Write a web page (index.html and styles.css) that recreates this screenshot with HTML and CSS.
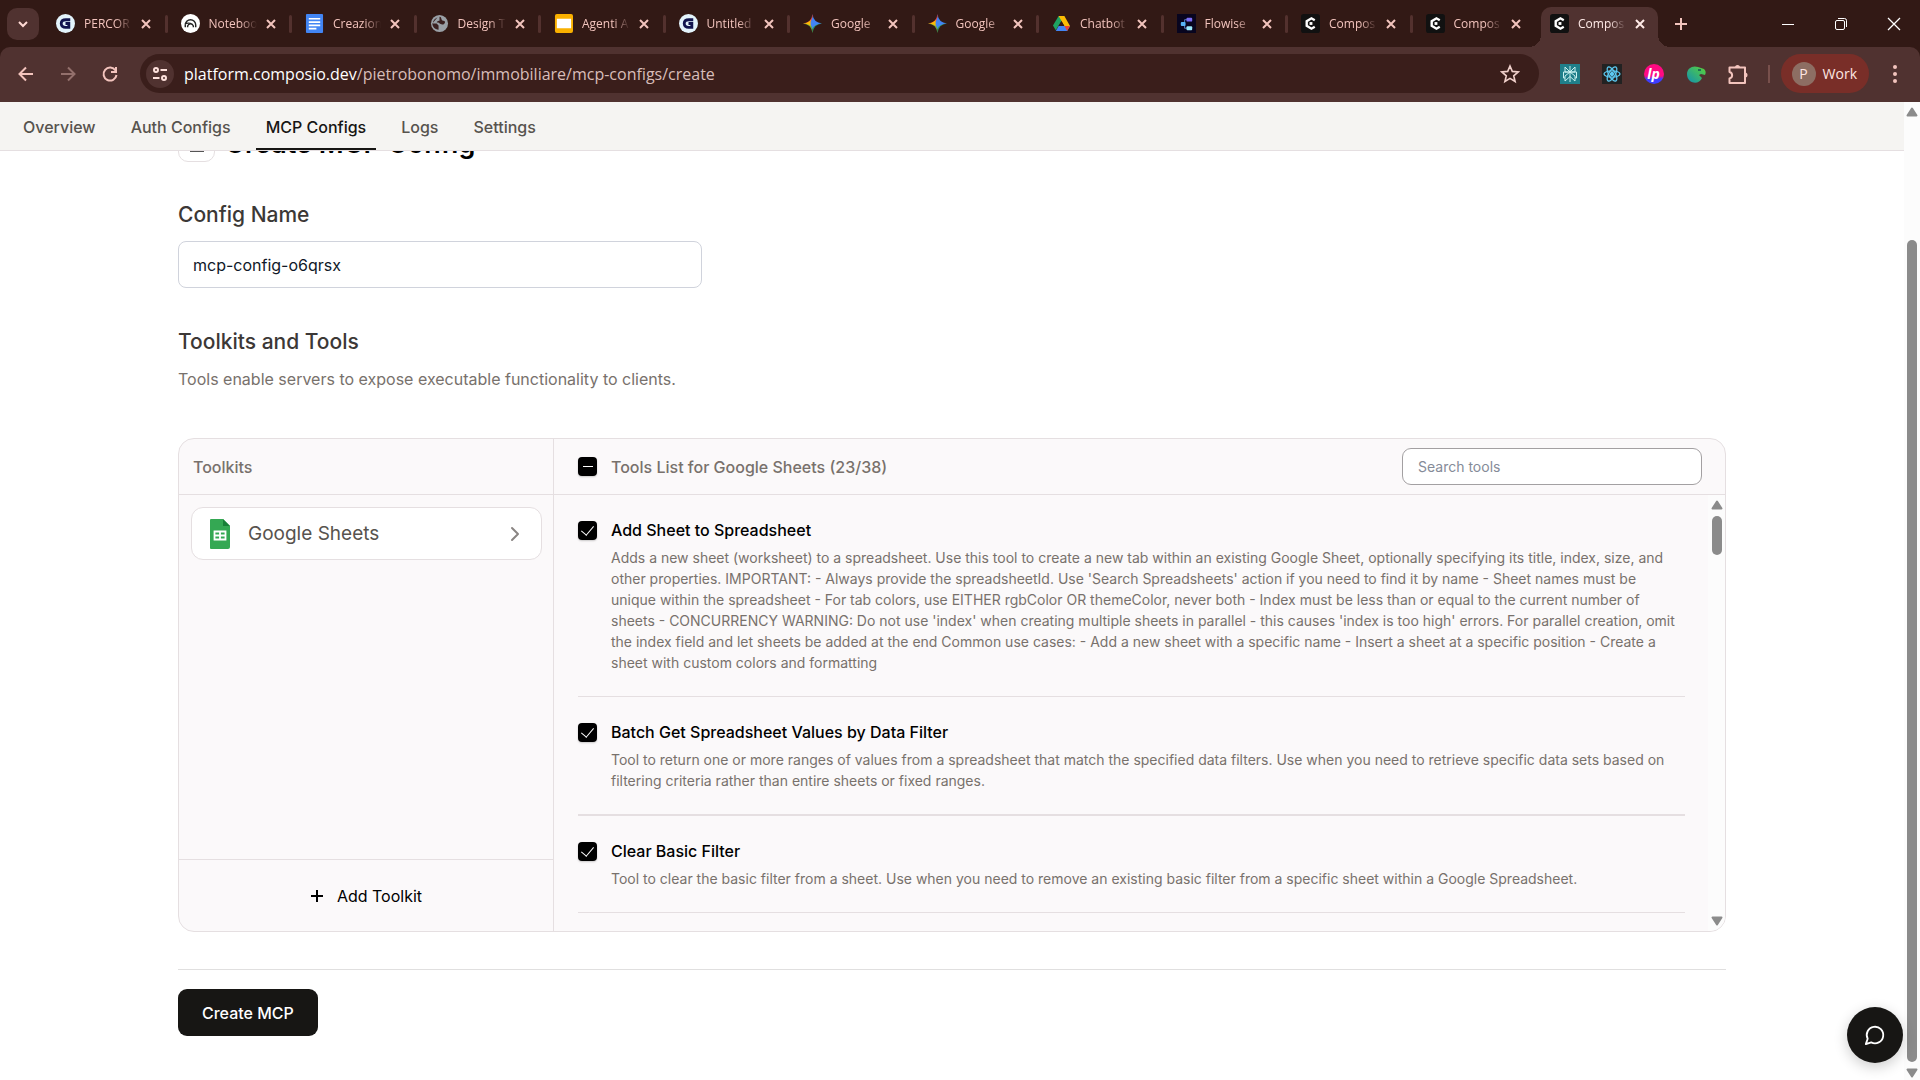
FILE: index.html
```html
<!DOCTYPE html>
<html lang="en">
<head>
<meta charset="utf-8">
<title>Composio</title>
<link rel="stylesheet" href="styles.css">
</head>
<body>
<svg class="defs" aria-hidden="true">
  <symbol id="close" viewBox="0 0 12 12"><path d="M2 2l8 8M10 2l-8 8" fill="none" stroke="currentColor" stroke-width="2"/></symbol>
  <symbol id="gamma" viewBox="0 0 20 20"><circle cx="10" cy="10" r="10" fill="#e4f4fc"/><path d="M15 6H10.500C7.500 6 5.500 7.500 5.500 10s2 4 4.500 4h3.500v-4H10" fill="none" stroke="#12154f" stroke-width="3"/></symbol>
  <symbol id="gemini" viewBox="0 0 20 20"><path d="M10 0Q11 9 20 10H10z" fill="#3f7df0"/><path d="M10 0Q9 9 0 10h10z" fill="#f0453c"/><path d="M0 10q9 1 10 10V10z" fill="#6fae3c"/><path d="M20 10q-9 1-10 10V10z" fill="#2c9a68"/><path d="M10 3Q11 9 19 10q-8 1-9 6-1-5-5-6 4-1 5-7z" fill="#4285f4"/><path d="M0 10q6-.5 8-4v7q-3-3-8-3z" fill="#fbbc04"/></symbol>
  <symbol id="composio" viewBox="0 0 20 20"><rect width="20" height="20" rx="3" fill="#111"/><path d="M14.500 6.500L11 4.500 6 7.500v5l5 3 3.500-2" fill="none" stroke="#fff" stroke-width="2.500"/><path d="M9 10h3" stroke="#fff" stroke-width="3"/></symbol>
  <symbol id="arrow-up" viewBox="0 0 12 10"><path d="M6 1.500L10.500 8.500h-9z" fill="#8b8b8b" stroke="#8b8b8b" stroke-width="2" stroke-linejoin="round"/></symbol>
  <symbol id="arrow-down" viewBox="0 0 12 10"><path d="M6 8.500L1.500 1.500h9z" fill="#8b8b8b" stroke="#8b8b8b" stroke-width="2" stroke-linejoin="round"/></symbol>
</svg>

<header class="browser">
  <div class="tabstrip">
    <button class="tab-search" aria-label="Search tabs"><svg width="12" height="12" viewBox="0 0 12 12"><path d="M2 4l4 4 4-4" fill="none" stroke="currentColor" stroke-width="2"/></svg></button>
    <div class="tabs">
      <div class="tab"><svg class="favicon"><use href="#gamma"/></svg><span class="tab-title">PERCOR</span><button class="tab-close" aria-label="Close"><svg><use href="#close"/></svg></button></div>
      <div class="tab"><svg class="favicon" viewBox="0 0 20 20"><circle cx="10" cy="10" r="10" fill="#fff"/><path d="M4.500 14v-2.500a5.500 5.500 0 0 1 11 0V14M7 14v-1.500a3.200 3.200 0 0 1 6 0V14M4 10.500a8 8 0 0 1 8 .5" fill="none" stroke="#222" stroke-width="1.500"/></svg><span class="tab-title">Noteboo</span><button class="tab-close" aria-label="Close"><svg><use href="#close"/></svg></button></div>
      <div class="tab"><svg class="favicon" viewBox="0 0 20 20"><rect x="1" width="18" height="20" rx="1" fill="#4285f4"/><path d="M4 5h12M4 8.500h12M4 12h12M4 15.500h8" stroke="#fff" stroke-width="1.800"/></svg><span class="tab-title">Creazion</span><button class="tab-close" aria-label="Close"><svg><use href="#close"/></svg></button></div>
      <div class="tab"><svg class="favicon" viewBox="0 0 20 20"><circle cx="10" cy="10" r="9" fill="#9aa0a6"/><path d="M8 3.500C5 5 3 7 3 10h4l2 2v4.500c-4-.5-6.500-3-6.500-6.500M10 3c3 0 1 4 4 4s2 4-1 4-3-2-5-2 0-2 2-2z" fill="#3a2020"/></svg><span class="tab-title">Design T</span><button class="tab-close" aria-label="Close"><svg><use href="#close"/></svg></button></div>
      <div class="tab"><svg class="favicon" viewBox="0 0 20 20"><rect x="1" width="19" height="20" rx="2" fill="#f9b000"/><rect x="3" y="5" width="15" height="10" fill="#fff"/></svg><span class="tab-title">Agenti A</span><button class="tab-close" aria-label="Close"><svg><use href="#close"/></svg></button></div>
      <div class="tab"><svg class="favicon"><use href="#gamma"/></svg><span class="tab-title">Untitled</span><button class="tab-close" aria-label="Close"><svg><use href="#close"/></svg></button></div>
      <div class="tab"><svg class="favicon"><use href="#gemini"/></svg><span class="tab-title">Google</span><button class="tab-close" aria-label="Close"><svg><use href="#close"/></svg></button></div>
      <div class="tab"><svg class="favicon"><use href="#gemini"/></svg><span class="tab-title">Google</span><button class="tab-close" aria-label="Close"><svg><use href="#close"/></svg></button></div>
      <div class="tab"><svg class="favicon" viewBox="0 0 20 20"><path d="M7 2h6l-3 5-6 10-3-5z" fill="#1ea362"/><path d="M7 2h6l6 10.500h-6z" fill="#fbbc04"/><path d="M7 12.500h12L16 18H4z" fill="#4285f4"/><path d="M13 12.500h6L16 18z" fill="#ea4335"/><path d="M10 7.500l3 5H7z" fill="#321915"/></svg><span class="tab-title">Chatbot</span><button class="tab-close" aria-label="Close"><svg><use href="#close"/></svg></button></div>
      <div class="tab"><svg class="favicon" viewBox="0 0 20 20"><rect width="20" height="20" fill="#08051f"/><path d="M8 10V6h4M8 10v5h4" fill="none" stroke="#567cc0"/><rect x="10" y="4" width="6" height="4" rx="1" fill="#7a6cf5"/><rect x="4" y="8.500" width="5" height="4" rx="1" fill="#58b4f5"/><rect x="10" y="13" width="6" height="4" rx="1" fill="#9be8fb"/></svg><span class="tab-title">Flowise</span><button class="tab-close" aria-label="Close"><svg><use href="#close"/></svg></button></div>
      <div class="tab"><svg class="favicon"><use href="#composio"/></svg><span class="tab-title">Compos</span><button class="tab-close" aria-label="Close"><svg><use href="#close"/></svg></button></div>
      <div class="tab"><svg class="favicon"><use href="#composio"/></svg><span class="tab-title">Compos</span><button class="tab-close" aria-label="Close"><svg><use href="#close"/></svg></button></div>
      <div class="tab tab-active"><svg class="favicon"><use href="#composio"/></svg><span class="tab-title">Compos</span><button class="tab-close" aria-label="Close"><svg><use href="#close"/></svg></button></div>
    </div>
    <button class="new-tab" aria-label="New tab"><svg width="14" height="14" viewBox="0 0 14 14"><path d="M7 1v12M1 7h12" stroke="currentColor" stroke-width="2"/></svg></button>
    <div class="window-controls">
      <button aria-label="Minimize"><svg width="14" height="14" viewBox="0 0 14 14"><path d="M1 7.500h12" stroke="currentColor"/></svg></button>
      <button aria-label="Restore"><svg width="14" height="14" viewBox="0 0 14 14"><rect x="1.500" y="3.500" width="9" height="9" rx="1.500" fill="none" stroke="currentColor"/><path d="M4 1.500h6.500a2 2 0 0 1 2 2V10" fill="none" stroke="currentColor"/></svg></button>
      <button aria-label="Close window"><svg width="14" height="14" viewBox="0 0 14 14"><path d="M1 1l12 12M13 1L1 13" stroke="currentColor" stroke-width="1.300"/></svg></button>
    </div>
  </div>

  <div class="toolbar">
    <div class="nav-buttons">
      <button aria-label="Back"><svg width="20" height="20" viewBox="0 0 20 20"><path d="M17 10H4M10 3.500L3.500 10l6.500 6.500" fill="none" stroke="currentColor" stroke-width="2"/></svg></button>
      <button class="dim" aria-label="Forward"><svg width="20" height="20" viewBox="0 0 20 20"><path d="M3 10h13M10 3.500l6.500 6.500-6.500 6.500" fill="none" stroke="currentColor" stroke-width="2"/></svg></button>
      <button aria-label="Reload"><svg width="20" height="20" viewBox="0 0 20 20"><path d="M15.500 6.500A6.500 6.500 0 1 0 16.500 11" fill="none" stroke="currentColor" stroke-width="2"/><path d="M16 3v5h-5" fill="none" stroke="currentColor" stroke-width="2"/></svg></button>
    </div>
    <div class="address">
      <button class="site-info" aria-label="Site information"><svg width="18" height="18" viewBox="0 0 18 18" fill="none" stroke="currentColor" stroke-width="2"><circle cx="5" cy="5" r="2"/><path d="M9.500 5H16M2 13h6.500"/><circle cx="13" cy="13" r="2"/></svg></button>
      <a class="url" href="#"><span class="host">platform.composio.dev</span>/pietrobonomo/immobiliare/mcp-configs/create</a>
      <button class="star" aria-label="Bookmark"><svg width="20" height="20" viewBox="0 0 20 20"><path d="M10 2l2.300 5.400 5.900.5-4.500 3.900 1.400 5.700-5.100-3.100-5.100 3.100 1.400-5.700L1.800 7.900l5.900-.5z" fill="none" stroke="currentColor" stroke-width="1.600"/></svg></button>
    </div>
    <div class="extensions">
      <button aria-label="Perplexity"><svg width="20" height="20" viewBox="0 0 20 20"><rect width="20" height="20" fill="#1f7f8a"/><path d="M10 2v16M5 3l5 5 5-5v5H5zM3.500 8h13v6H15v3l-5-4.500L5 17v-3H3.500z M5 14v-2l5-4 5 4v2" fill="none" stroke="#c9f1f0" stroke-width="1"/></svg></button>
      <button aria-label="React Developer Tools"><svg width="20" height="20" viewBox="0 0 20 20" fill="none" stroke="#5cc8f0" stroke-width="1.300"><rect width="20" height="20" fill="#222" stroke="none"/><ellipse cx="10" cy="10" rx="8" ry="3.200"/><ellipse cx="10" cy="10" rx="8" ry="3.200" transform="rotate(60 10 10)"/><ellipse cx="10" cy="10" rx="8" ry="3.200" transform="rotate(120 10 10)"/><circle cx="10" cy="10" r="1.500" fill="#5cc8f0"/></svg></button>
      <button class="lp" aria-label="LP">lp</button>
      <button aria-label="Gecko"><svg width="20" height="20" viewBox="0 0 20 20"><defs><linearGradient id="g" x1="0" y1="1" x2="1" y2="0"><stop offset="0" stop-color="#1291b0"/><stop offset="1" stop-color="#5bd336"/></linearGradient></defs><path d="M1 10C1 4 7 1 12 3l6 2c2 2 2 4 1 6l-4-1-2 1 3 3c-2 5-8 6-12 3-2-2-3-4-3-7z" fill="url(#g)"/><path d="M12 6h3" stroke="#155" stroke-width="1.500"/></svg></button>
      <button aria-label="Extensions"><svg width="22" height="22" viewBox="0 0 22 22"><path d="M2.500 4.500H18V20H2.500v-4.500c3.500-1 3.500-5.500 0-6.500z" fill="none" stroke="currentColor" stroke-width="2" stroke-linejoin="round"/><path d="M8 4.500a2.500 2.500 0 0 1 5 0zM18 9.500a2.500 2.500 0 0 1 0 5z" fill="currentColor"/></svg></button>
    </div>
    <span class="toolbar-divider"></span>
    <button class="profile"><span class="avatar">P</span>Work</button>
    <button class="more" aria-label="Menu"><svg width="6" height="20" viewBox="0 0 6 20" fill="currentColor"><circle cx="3" cy="3" r="2"/><circle cx="3" cy="10" r="2"/><circle cx="3" cy="17" r="2"/></svg></button>
  </div>
</header>

<div class="viewport">
  <div class="page">
    <nav class="site-nav">
      <a href="#">Overview</a>
      <a href="#">Auth Configs</a>
      <a href="#" class="current">MCP Configs</a>
      <a href="#">Logs</a>
      <a href="#">Settings</a>
    </nav>
    <div class="scroll">
      <main class="content">
        <div class="heading">
          <button class="back" aria-label="Back"><svg width="18" height="18" viewBox="0 0 18 18"><path d="M3 3h12v13H3z" fill="none" stroke="#555" stroke-width="2"/></svg></button>
          <h1>Create MCP Config</h1>
        </div>

        <label class="section-title" for="config-name">Config Name</label>
        <input class="config-input" id="config-name" type="text" value="mcp-config-o6qrsx">

        <h2 class="section-title toolkits-title">Toolkits and Tools</h2>
        <p class="section-text">Tools enable servers to expose executable functionality to clients.</p>

        <section class="panel">
          <div class="toolkits">
            <div class="panel-head">Toolkits</div>
            <div class="toolkit-list">
              <button class="toolkit">
                <svg width="22" height="30" viewBox="0 0 22 30"><path d="M2 0h12l7 7v21a2 2 0 0 1-2 2H2a1 1 0 0 1-1-1V1a1 1 0 0 1 1-1z" fill="#34a853"/><path d="M14 0l7 7h-7z" fill="#188038"/><path d="M5.500 12.500h11v8h-11zM5.500 16.500h11M11 12.500v8" fill="none" stroke="#fff" stroke-width="1.800"/></svg>
                <span>Google Sheets</span>
                <svg width="10" height="16" viewBox="0 0 10 16"><path d="M2 2l6 6-6 6" fill="none" stroke="#8a8583" stroke-width="2" stroke-linecap="round" stroke-linejoin="round"/></svg>
              </button>
            </div>
            <button class="add-toolkit"><svg width="14" height="14" viewBox="0 0 14 14"><path d="M7 1v12M1 7h12" stroke="currentColor" stroke-width="2"/></svg>Add Toolkit</button>
          </div>
          <div class="tools">
            <div class="panel-head tools-head">
              <label class="select-all"><input class="check check-mixed" type="checkbox">Tools List for Google Sheets (23/38)</label>
              <input class="search" type="search" placeholder="Search tools" aria-label="Search tools">
            </div>
            <div class="tools-body">
              <ul class="tool-list">
                <li class="tool">
                  <input class="check" id="t1" type="checkbox" checked>
                  <div><label for="t1">Add Sheet to Spreadsheet</label>
                  <p>Adds a new sheet (worksheet) to a spreadsheet. Use this tool to create a new tab within an existing Google Sheet, optionally specifying its title, index, size, and other properties. IMPORTANT: - Always provide the spreadsheetId. Use 'Search Spreadsheets' action if you need to find it by name - Sheet names must be unique within the spreadsheet - For tab colors, use EITHER rgbColor OR themeColor, never both - Index must be less than or equal to the current number of sheets - CONCURRENCY WARNING: Do not use 'index' when creating multiple sheets in parallel - this causes 'index is too high' errors. For parallel creation, omit the index field and let sheets be added at the end Common use cases: - Add a new sheet with a specific name - Insert a sheet at a specific position - Create a sheet with custom colors and formatting</p></div>
                </li>
                <li class="tool">
                  <input class="check" id="t2" type="checkbox" checked>
                  <div><label for="t2">Batch Get Spreadsheet Values by Data Filter</label>
                  <p>Tool to return one or more ranges of values from a spreadsheet that match the specified data filters. Use when you need to retrieve specific data sets based on filtering criteria rather than entire sheets or fixed ranges.</p></div>
                </li>
                <li class="tool">
                  <input class="check" id="t3" type="checkbox" checked>
                  <div><label for="t3">Clear Basic Filter</label>
                  <p>Tool to clear the basic filter from a sheet. Use when you need to remove an existing basic filter from a specific sheet within a Google Spreadsheet.</p></div>
                </li>
              </ul>
              <div class="scrollbar" aria-hidden="true"><svg><use href="#arrow-up"/></svg><span class="track"><span class="thumb thumb-list"></span></span><svg><use href="#arrow-down"/></svg></div>
            </div>
          </div>
        </section>

        <footer class="actions"><button class="create">Create MCP</button></footer>
      </main>
    </div>
  </div>
  <div class="scrollbar scrollbar-page" aria-hidden="true"><svg><use href="#arrow-up"/></svg><span class="track track-page"><span class="thumb thumb-page"></span></span><svg><use href="#arrow-down"/></svg></div>
</div>
<button class="chat" aria-label="Chat"><svg width="22" height="22" viewBox="0 0 24 24"><path d="M7.900 20A9 9 0 1 0 4 16.100L2 22z" fill="none" stroke="#fff" stroke-width="2" stroke-linecap="round" stroke-linejoin="round"/></svg></button>
</body>
</html>
```

FILE: styles.css
```css
* { box-sizing: border-box; }

body {
  margin: 0;
  height: 100vh;
  display: flex;
  flex-direction: column;
  overflow: hidden;
  background: #fff;
  font-family: Inter, "Liberation Sans", sans-serif;
  font-size: 16px;
  color: #000;
}

button {
  margin: 0;
  padding: 0;
  border: 0;
  background: none;
  color: inherit;
  font: inherit;
  display: flex;
  align-items: center;
  justify-content: center;
}

a { color: inherit; text-decoration: none; }
h1, h2, p, ul { margin: 0; padding: 0; }
ul { list-style: none; }
svg { display: block; flex: none; }
.defs { position: absolute; width: 0; height: 0; }

/* Browser chrome */
.browser {
  flex: none;
  background: #321915;
  color: #f3c4bd;
  font-family: "Open Sans", "Noto Sans", sans-serif;
}

.tabstrip { display: flex; height: 47px; align-items: stretch; }

.tab-search {
  width: 32px;
  height: 32px;
  margin: 8px 4px 0 7px;
  border-radius: 10px;
  background: #503230;
  color: #ffdad5;
}

.tabs { flex: 1; display: flex; min-width: 0; }

.tab {
  flex: 125 1 0;
  min-width: 0;
  display: flex;
  align-items: center;
  padding-left: 13px;
  position: relative;
}

.tab:not(.tab-active)::after {
  content: "";
  width: 3px;
  height: 18px;
  margin-left: auto;
  border-radius: 2px;
  background: #53312e;
}

.tab:nth-last-child(2)::after { visibility: hidden; }

.favicon { width: 19px; height: 19px; }

.tab-title {
  width: 48px;
  margin-left: 9px;
  overflow: hidden;
  white-space: nowrap;
  font-size: 12px;
  line-height: 20px;
  mask-image: linear-gradient(to right, #000 65%, transparent);
}

.tab-close { width: 20px; height: 20px; margin-left: 4px; }
.tab-close svg { width: 12px; height: 12px; }

.tab-active {
  flex: 121 1 0;
  margin: 7px 4px 0 4px;
  padding: 0 0 7px 9px;
  border-radius: 10px 10px 0 0;
  background: #503230;
  color: #ffeae7;
}

.tab-active::before,
.tab-active::after {
  content: "";
  position: absolute;
  bottom: 0;
  width: 12px;
  height: 12px;
}

.tab-active::before { right: 100%; background: radial-gradient(circle at 0 0, transparent 12px, #503230 12px); }
.tab-active::after { left: 100%; background: radial-gradient(circle at 100% 0, transparent 12px, #503230 12px); }

.new-tab { width: 38px; margin-right: 61px; }
.window-controls { display: flex; color: #fff; }
.window-controls button { width: 53px; }

.toolbar {
  display: flex;
  align-items: center;
  height: 55px;
  padding: 0 10px 2px 5px;
  border-radius: 10px 10px 0 0;
  background: #503230;
}

.nav-buttons { display: flex; margin-right: 9px; }
.nav-buttons button { width: 42px; height: 36px; }
.nav-buttons .dim { color: #93706c; }

.address {
  flex: 1;
  display: flex;
  align-items: center;
  height: 39px;
  padding: 0 19px 0 6px;
  border-radius: 20px;
  background: #3a1e1b;
}

.site-info {
  width: 28px;
  height: 28px;
  border-radius: 50%;
  background: #503230;
  color: #ffe2dd;
}

.url { flex: 1; margin-left: 10px; font-size: 16px; color: #d8bdb9; white-space: nowrap; }
.host { color: #fff; }
.star { color: #f0d0cb; }

.extensions { display: flex; margin-left: 10px; }
.extensions button { width: 42px; height: 36px; }

.extensions .lp {
  width: 20px;
  height: 20px;
  margin: 8px 11px;
  border-radius: 50%;
  background: linear-gradient(#ff0a82 60%, #3d3dff 75%);
  color: #fff;
  font-size: 14px;
  font-style: italic;
  font-weight: 700;
}

.toolbar-divider { width: 2px; height: 18px; margin: 0 11px 0 9px; background: #78504c; }

.profile {
  height: 39px;
  padding: 0 12px 0 11px;
  gap: 7px;
  border-radius: 20px;
  background: #792e28;
  color: #ffe6e2;
  font-size: 14px;
}

.avatar {
  width: 24px;
  height: 24px;
  border-radius: 50%;
  background: #8d6e63;
  font-size: 14px;
  line-height: 24px;
}

.more { width: 30px; height: 36px; margin-left: 11px; }

/* Page */
.viewport { flex: 1; display: flex; min-height: 0; }
.page { flex: 1; display: flex; flex-direction: column; min-width: 0; }

.site-nav {
  flex: none;
  display: flex;
  gap: 15px;
  height: 49px;
  padding: 0 13px;
  border-bottom: 1px solid #e5dfe1;
  background: #f5f4f2;
  font-weight: 500;
  color: #57534e;
}

.site-nav a { display: flex; align-items: center; padding: 4px 10px 0; border-bottom: 2px solid transparent; }
.site-nav .current { border-color: #171614; color: #171614; }

.scroll { flex: 1; min-height: 0; overflow: hidden; }
.content { max-width: 1548px; margin: 0 auto; }

.heading { display: flex; align-items: center; gap: 10px; margin-top: -26px; margin-bottom: 38px; }
.back { width: 37px; height: 37px; border: 1px solid #e5dfe1; border-radius: 10px; }
h1 { font-size: 27px; line-height: 36px; font-weight: 600; }

.section-title { display: block; font-size: 21px; line-height: 30px; font-weight: 500; color: #3c3836; }

.config-input {
  display: block;
  width: 524px;
  max-width: 100%;
  height: 47px;
  margin-top: 11px;
  padding: 0 14px;
  border: 1px solid #d0d3dc;
  border-radius: 8px;
  background: #fff;
  color: #101828;
  font: inherit;
}

.toolkits-title { margin-top: 39px; }
.section-text { margin-top: 10px; line-height: 24px; color: #78716c; }

.panel {
  display: flex;
  height: 494px;
  margin-top: 47px;
  overflow: hidden;
  border: 1px solid #e5dfe1;
  border-radius: 16px;
  background: #fbf9fa;
}

.toolkits { flex: none; width: 375px; display: flex; flex-direction: column; border-right: 1px solid #e5dfe1; }

.panel-head {
  flex: none;
  display: flex;
  align-items: center;
  height: 56px;
  padding: 0 14px;
  border-bottom: 1px solid #e5dfe1;
  font-weight: 500;
  color: #78716c;
}

.toolkit-list { flex: 1; padding: 12px 11px 12px 12px; }

.toolkit {
  width: 100%;
  height: 53px;
  padding: 0 21px 0 17px;
  gap: 17px;
  border: 1px solid #e5dfe1;
  border-radius: 12px;
  background: #fff;
  color: #57534e;
  font-size: 19px;
}

.toolkit span { flex: 1; text-align: left; }
.add-toolkit { flex: none; height: 72px; gap: 13px; border-top: 1px solid #e5dfe1; }

.tools { flex: 1; min-width: 0; display: flex; flex-direction: column; }
.tools-head { justify-content: space-between; padding: 0 23px 0 24px; }
.select-all { display: flex; align-items: center; gap: 14px; }

.check {
  flex: none;
  appearance: none;
  display: grid;
  place-items: center;
  width: 19px;
  height: 19px;
  margin: 0;
  border-radius: 4px;
  background: #000;
  box-shadow: 0 1px 2px #0003;
}

.check:checked::before {
  content: "";
  width: 6px;
  height: 11px;
  margin-bottom: 3px;
  border: solid #fff;
  border-width: 0 1px 1px 0;
  transform: rotate(40deg);
}

.check-mixed::before { content: ""; width: 10px; height: 1px; background: #fff; }

.search {
  width: 300px;
  height: 37px;
  padding: 0 15px;
  border: 1px solid #a3a0a2;
  border-radius: 9px;
  background: #fff;
  font: inherit;
  font-size: 14px;
  font-weight: 400;
}

.search::placeholder { color: #858b98; }

.tools-body { flex: 1; min-height: 0; display: flex; }
.tool-list { flex: 1; min-width: 0; padding: 0 23px 0 24px; overflow: hidden; }

.tool { display: flex; gap: 14px; padding: 23px 0; border-bottom: 1px solid #e5dfe1; }
.tool:nth-child(2) { border-bottom-width: 2px; }
.tool .check { margin-top: 3px; }
.tool label { display: block; font-weight: 500; line-height: 24px; }
.tool p { margin-top: 5px; padding-right: 8px; font-size: 14px; line-height: 21px; color: #78716c; }

.actions { margin-top: 37px; padding-top: 19px; border-top: 1px solid #e0dfdf; }

.create {
  height: 47px;
  padding: 0 24px;
  border-radius: 9px;
  background: #171614;
  color: #fff;
  font-weight: 500;
}

.scrollbar {
  flex: none;
  display: flex;
  flex-direction: column;
  align-items: center;
  width: 17px;
  padding: 5px 0;
  background: #fcfcfc;
}

.scrollbar svg { width: 12px; height: 10px; }
.scrollbar-page { width: 16px; padding-bottom: 2px; }
.track { flex: 1; display: flex; flex-direction: column; width: 10px; padding: 6px 0; }
.thumb { border-radius: 5px; background: #8b8b8b; }
.thumb-list { height: 39px; }
.thumb-page { flex: 1; }
.track-page { padding-top: 123px; }

.chat {
  position: fixed;
  right: 17px;
  bottom: 17px;
  width: 56px;
  height: 56px;
  border-radius: 50%;
  background: #171614;
  box-shadow: 0 4px 14px #0003;
}
```
